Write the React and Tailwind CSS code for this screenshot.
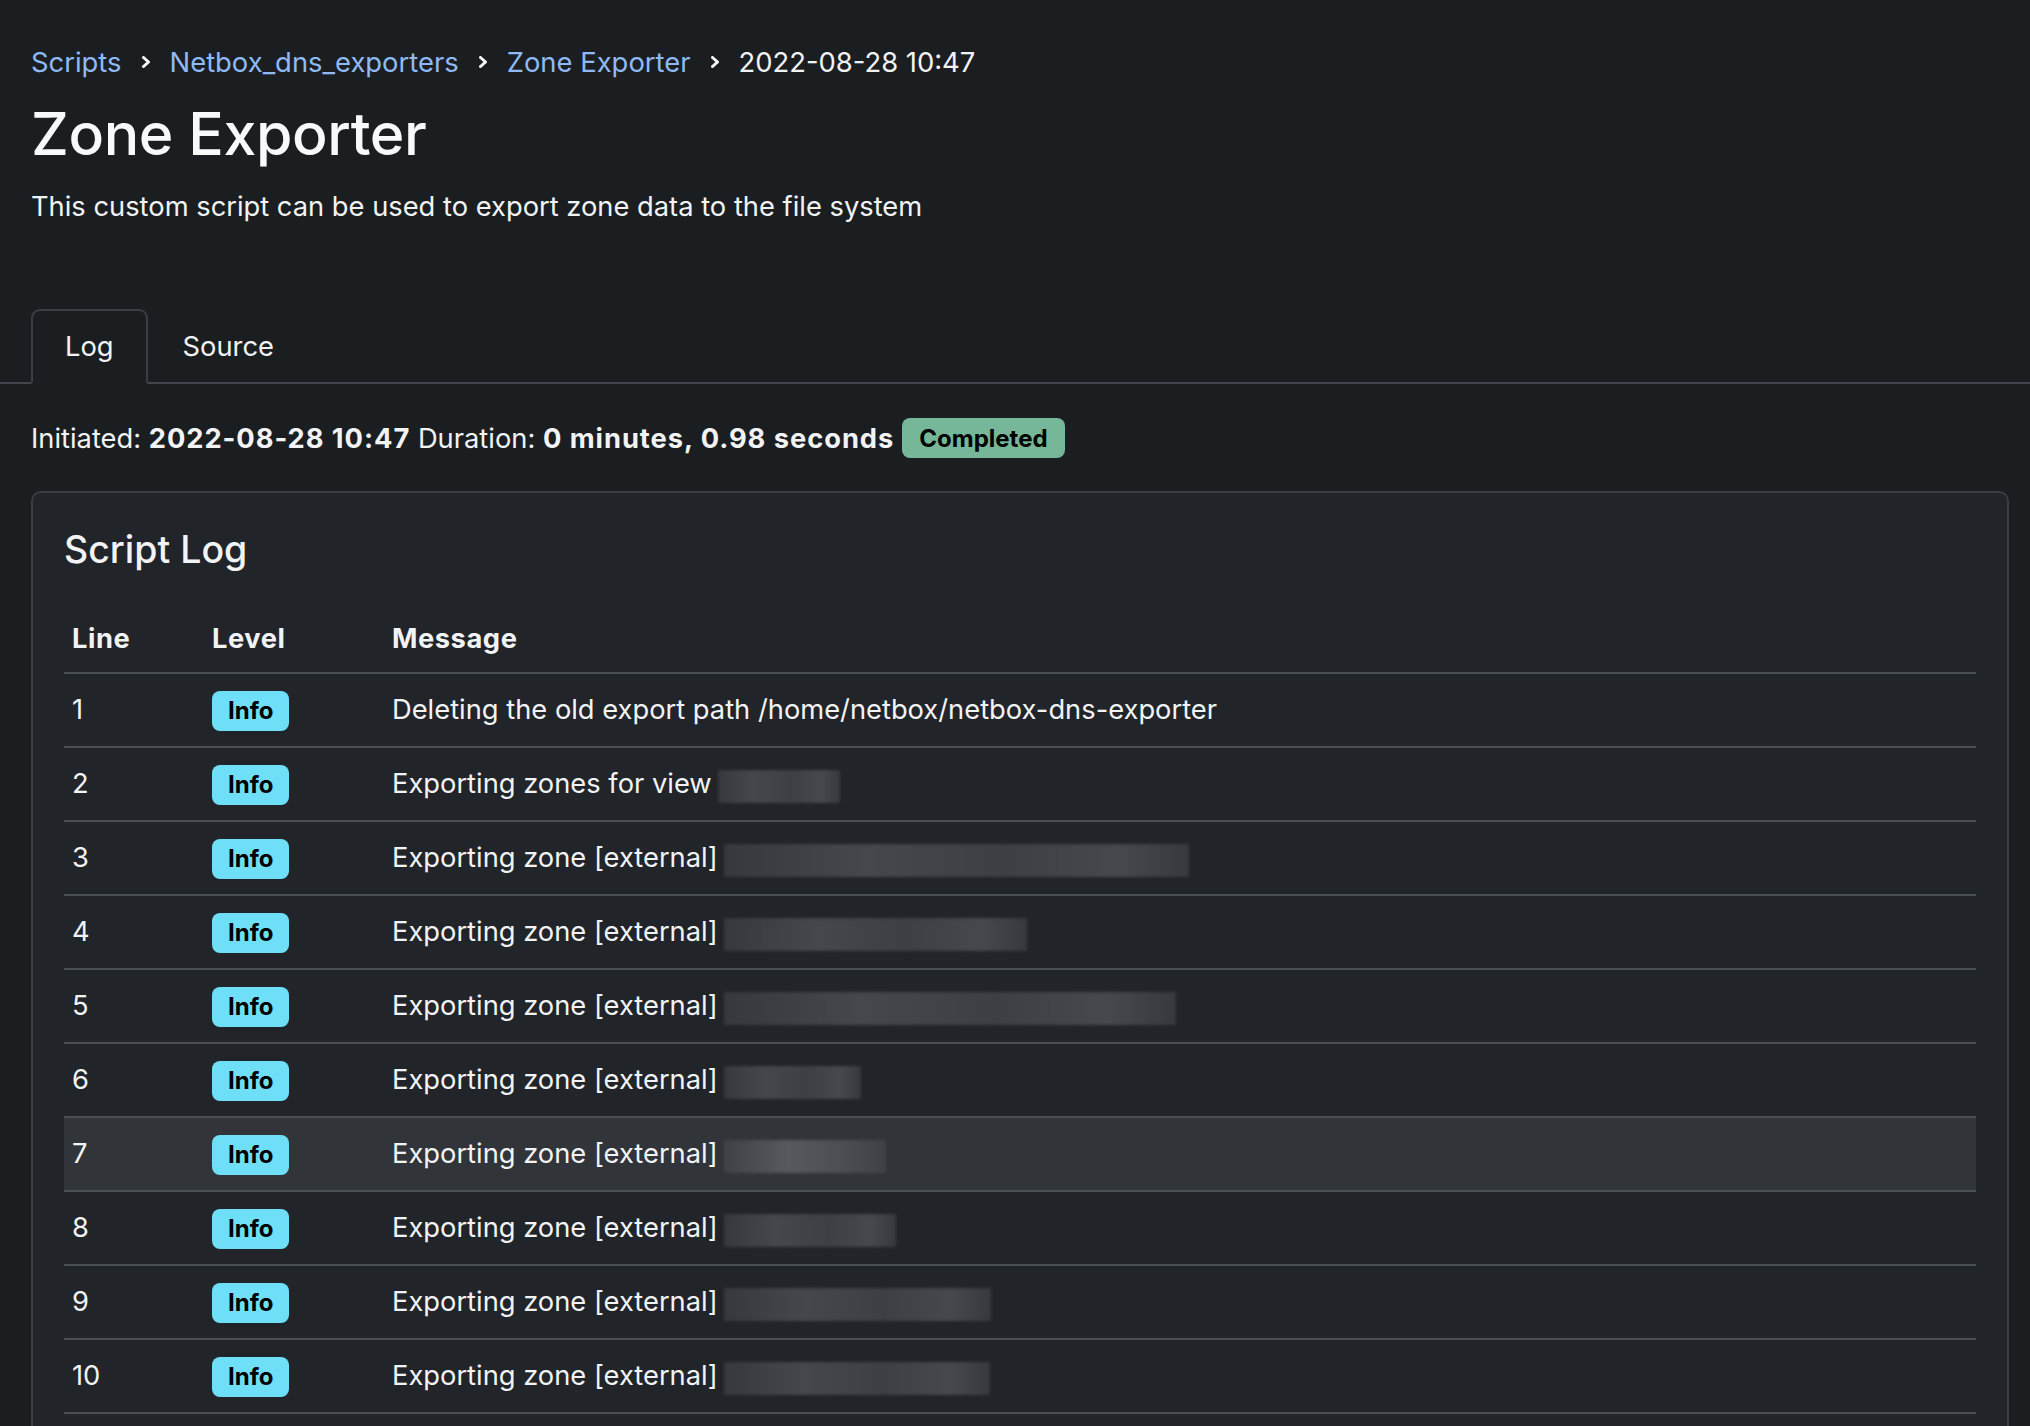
import React from "react";

const rows = [
  { n: 1, text: "Deleting the old export path /home/netbox/netbox-dns-exporter", blur: 0 },
  { n: 2, text: "Exporting zones for view", blur: 122 },
  { n: 3, text: "Exporting zone [external]", blur: 465 },
  { n: 4, text: "Exporting zone [external]", blur: 303 },
  { n: 5, text: "Exporting zone [external]", blur: 452 },
  { n: 6, text: "Exporting zone [external]", blur: 137 },
  { n: 7, text: "Exporting zone [external]", blur: 162, hover: true },
  { n: 8, text: "Exporting zone [external]", blur: 172 },
  { n: 9, text: "Exporting zone [external]", blur: 267 },
  { n: 10, text: "Exporting zone [external]", blur: 266 },
];

function Chevron() {
  return (
    <svg width="10" height="12" viewBox="0 0 10 12" className="mx-[19px] shrink-0">
      <path d="M2.5 1.5 L7.5 6 L2.5 10.5" fill="none" stroke="#f8f9fa" strokeWidth="3" strokeLinecap="round" strokeLinejoin="round" />
    </svg>
  );
}

export default function App() {
  return (
    <div className="min-h-screen bg-[#1b1e21] text-[#f1f3f5] font-['Inter','Noto_Sans',sans-serif] overflow-hidden">
      <div className="px-[31px] pt-[43px]">
        <nav className="flex items-center h-[38px] text-[27.4px] leading-[38px]">
          <span className="text-[#8fbaf6]">Scripts</span>
          <Chevron />
          <span className="text-[#8fbaf6]">Netbox_dns_exporters</span>
          <Chevron />
          <span className="text-[#8fbaf6]">Zone Exporter</span>
          <Chevron />
          <span className="text-[#f1f3f5]">2022-08-28 10:47</span>
        </nav>
        <h1 className="mt-[17px] text-[59px] leading-[71px] font-medium text-[#f8f9fa] tracking-[-0.4px]">Zone Exporter</h1>
        <p className="mt-[18px] text-[27.3px] leading-[39px]">This custom script can be used to export zone data to the file system</p>
      </div>

      <div className="mt-[83px] flex border-b-2 border-[#43474d] pl-[31px] text-[27.3px]">
        <div className="-mb-[2px] border-2 border-[#3a3e44] border-b-[#1b1e21] rounded-t-[9px] px-[32px] pt-[16px] pb-[16px] leading-[39px] bg-[#1b1e21]">Log</div>
        <div className="-mb-[2px] border-2 border-transparent px-[33px] pt-[16px] pb-[16px] leading-[39px]">Source</div>
      </div>

      <div className="px-[31px] mt-[34px] flex items-center text-[27.3px] leading-[39px]">
        <span>Initiated:&nbsp;</span>
        <span className="font-bold tracking-[0.035em]">2022-08-28 10:47</span>
        <span>&nbsp;Duration:&nbsp;</span>
        <span className="font-bold tracking-[0.035em]">0 minutes, 0.98 seconds</span>
        <span className="ml-[8px] inline-flex items-center h-[40px] px-[17px] rounded-[8px] bg-[#75b798] text-black font-bold text-[24px]">Completed</span>
      </div>

      <div className="mt-[33px] ml-[31px] mr-[21px] border-2 border-[#3a3d42] rounded-[10px] bg-[#212428] px-[31px] pt-[33px] pb-[40px]">
        <h2 className="text-[37.5px] leading-[47px] font-medium">Script Log</h2>
        <div className="mt-[27px] text-[27.3px]">
          <div className="flex items-center h-[74px] pt-[6px] border-b-2 border-[#4a4f55] font-bold tracking-[0.02em]">
            <div className="w-[140px] px-[8px]">Line</div>
            <div className="w-[180px] px-[8px]">Level</div>
            <div className="flex-1 px-[8px]">Message</div>
          </div>
          {rows.map((r) => (
            <div key={r.n} className={`flex items-center h-[74px] border-b-2 border-[#4a4f55] ${r.hover ? "bg-[#313439]" : ""}`}>
              <div className="w-[140px] px-[8px]">{r.n}</div>
              <div className="w-[180px] px-[8px]">
                <span className="inline-flex items-center h-[40px] px-[16px] rounded-[8px] bg-[#6edff6] text-black font-bold text-[24px]">Info</span>
              </div>
              <div className="flex-1 px-[8px] flex items-center">
                <span>{r.text}</span>
                {r.blur > 0 && (
                  <span
                    className={`ml-[6px] mt-[4px] inline-block h-[33px] blur-[1.5px] ${r.hover ? "bg-[linear-gradient(90deg,#3e4145,#56595d_40%,#4a4d51_75%,#3e4145)]" : "bg-[linear-gradient(90deg,#35383c,#44474b_30%,#3c3f43_60%,#45484c_85%,#36393d)]"}`}
                    style={{ width: r.blur }}
                  />
                )}
              </div>
            </div>
          ))}
        </div>
      </div>
    </div>
  );
}
